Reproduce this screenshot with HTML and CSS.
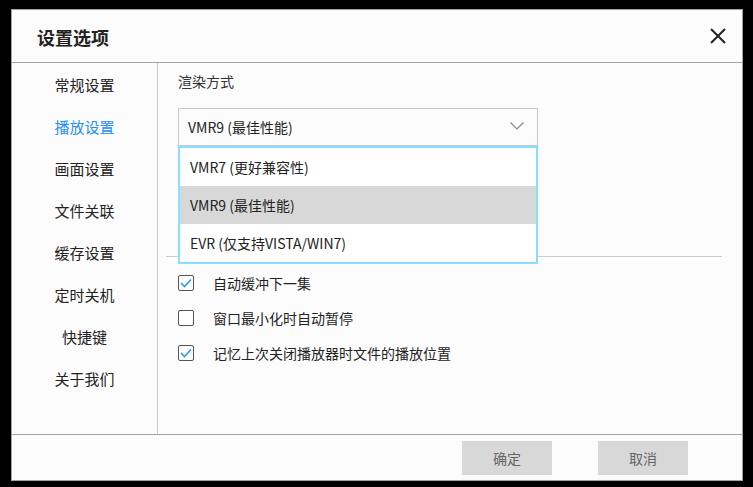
FILE: index.html
```html
<!DOCTYPE html>
<html lang="zh-CN">
<head>
    <meta charset="UTF-8">
    <title>设置选项</title>
    <link rel="stylesheet" href="styles.css">
</head>
<body>
    <div class="dialog">
        <div class="dialog-header">
            <h1 class="dialog-title">设置选项</h1>
            <button class="close-button" aria-label="关闭">
                <svg width="16" height="16" viewBox="0 0 16 16">
                    <path d="M1 1 L15 15 M15 1 L1 15" stroke="#222" stroke-width="2" fill="none"/>
                </svg>
            </button>
        </div>
        <div class="dialog-body">
            <ul class="side-nav">
                <li class="nav-item">常规设置</li>
                <li class="nav-item active">播放设置</li>
                <li class="nav-item">画面设置</li>
                <li class="nav-item">文件关联</li>
                <li class="nav-item">缓存设置</li>
                <li class="nav-item">定时关机</li>
                <li class="nav-item">快捷键</li>
                <li class="nav-item">关于我们</li>
            </ul>
            <div class="content">
                <div class="render-section">
                    <div class="field-label">渲染方式</div>
                    <div class="select-wrap">
                        <div class="select-box">
                            <span>VMR9 (最佳性能)</span>
                            <svg class="chevron" width="14" height="8" viewBox="0 0 14 8">
                                <path d="M0.5 0.5 L7 7 L13.5 0.5" stroke="#8a8a8a" stroke-width="1.2" fill="none"/>
                            </svg>
                        </div>
                        <ul class="dropdown">
                            <li class="dropdown-item">VMR7 (更好兼容性)</li>
                            <li class="dropdown-item selected">VMR9 (最佳性能)</li>
                            <li class="dropdown-item">EVR (仅支持VISTA/WIN7)</li>
                        </ul>
                    </div>
                </div>
                <div class="separator"></div>
                <div class="checks">
                    <label class="check-row">
                        <span class="checkbox checked"><svg width="12" height="10" viewBox="0 0 12 10"><path d="M1 5 L4.5 8.5 L11 1.5" stroke="#2a9af3" stroke-width="1.6" fill="none"/></svg></span>
                        <span>自动缓冲下一集</span>
                    </label>
                    <label class="check-row">
                        <span class="checkbox"></span>
                        <span>窗口最小化时自动暂停</span>
                    </label>
                    <label class="check-row">
                        <span class="checkbox checked"><svg width="12" height="10" viewBox="0 0 12 10"><path d="M1 5 L4.5 8.5 L11 1.5" stroke="#2a9af3" stroke-width="1.6" fill="none"/></svg></span>
                        <span>记忆上次关闭播放器时文件的播放位置</span>
                    </label>
                </div>
            </div>
        </div>
        <div class="dialog-footer">
            <button class="footer-button">确定</button>
            <button class="footer-button">取消</button>
        </div>
    </div>
</body>
</html>
```

FILE: styles.css
```css
body {
    margin: 0;
    background-color: #000;
    height: 487px;
    font-family: "Noto Sans CJK SC", "Noto Sans", sans-serif;
    color: #222;
}
.dialog {
    margin: 9px 0 0 11px;
    width: 730px;
    height: 470px;
    border: 1px solid #a3a3a3;
    background-color: #fcfcfc;
    display: flex;
    flex-direction: column;
}
.dialog-header {
    height: 52px;
    border-bottom: 1px solid #a3a3a3;
    display: flex;
    align-items: center;
    justify-content: space-between;
    padding: 0 16px 0 25px;
    flex-shrink: 0;
}
.dialog-title {
    margin: 0;
    font-size: 18px;
    font-weight: bold;
    color: #222;
    line-height: 1;
    padding-top: 2px;
}
.close-button {
    border: none;
    background: none;
    padding: 0;
    width: 16px;
    height: 16px;
    cursor: pointer;
    display: flex;
}
.dialog-body {
    height: 371px;
    border-bottom: 1px solid #a3a3a3;
    display: flex;
    flex-shrink: 0;
}
.side-nav {
    list-style: none;
    margin: 0;
    padding: 1px 0 0 0;
    width: 145px;
    border-right: 1px solid #c8c8c8;
}
.nav-item {
    height: 42px;
    line-height: 42px;
    text-align: center;
    font-size: 15px;
    color: #222;
    cursor: pointer;
}
.nav-item.active {
    color: #2590f0;
}
.content {
    flex: 1;
    display: flex;
    flex-direction: column;
}
.render-section {
    padding: 8px 0 0 20px;
    height: 185px;
}
.field-label {
    font-size: 14px;
    line-height: 20px;
    color: #333;
    margin-bottom: 17px;
}
.select-wrap {
    position: relative;
    width: 360px;
}
.select-box {
    height: 36px;
    border: 1px solid #c8c8c8;
    display: flex;
    align-items: center;
    justify-content: space-between;
    padding: 0 13px 0 9px;
    font-size: 14px;
    color: #222;
}
.chevron {
    margin-top: -2px;
}
.dropdown {
    position: absolute;
    top: 38px;
    left: 0;
    width: 356px;
    margin: 0;
    padding: 0;
    list-style: none;
    border: 2px solid #86dffc;
    background-color: #fff;
    z-index: 2;
}
.dropdown-item {
    height: 38px;
    line-height: 38px;
    padding-left: 10px;
    font-size: 14px;
    color: #222;
}
.dropdown-item.selected {
    background-color: #d8d8d8;
}
.separator {
    height: 1px;
    background-color: #cdcdcd;
    margin: 0 20px 0 8px;
}
.checks {
    padding: 18px 0 0 20px;
    display: flex;
    flex-direction: column;
    gap: 19px;
}
.check-row {
    display: flex;
    align-items: center;
    height: 16px;
    font-size: 14px;
    color: #222;
}
.checkbox {
    width: 14px;
    height: 14px;
    border: 1px solid #555;
    border-radius: 2px;
    margin-right: 19px;
    display: flex;
    align-items: center;
    justify-content: center;
    background-color: #fff;
}
.dialog-footer {
    flex: 1;
    display: flex;
    justify-content: flex-end;
    align-items: flex-start;
    padding: 6px 54px 0 0;
    gap: 46px;
}
.footer-button {
    width: 90px;
    height: 34px;
    border: none;
    background-color: #d8d8d8;
    color: #666;
    font-family: "Noto Sans CJK SC", sans-serif;
    font-size: 14px;
    cursor: pointer;
}
```
